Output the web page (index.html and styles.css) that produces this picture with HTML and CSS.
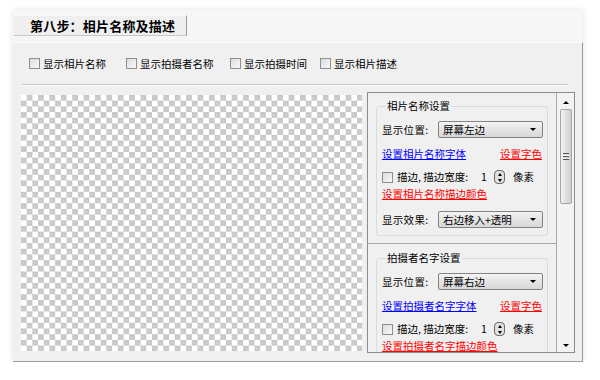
FILE: index.html
```html
<!DOCTYPE html>
<html lang="zh-CN">
<head>
    <meta charset="UTF-8">
    <title>第八步：相片名称及描述</title>
    <link rel="stylesheet" href="styles.css">
</head>
<body>

    <div class="window">
        <!-- 标题栏 -->
        <div class="head">
            <div class="tab">第八步：相片名称及描述</div>
        </div>

        <div class="content">
            <!-- 显示选项 -->
            <div class="opts">
                <label class="opt"><span class="cb"></span>显示相片名称</label>
                <label class="opt"><span class="cb"></span>显示拍摄者名称</label>
                <label class="opt"><span class="cb"></span>显示拍摄时间</label>
                <label class="opt"><span class="cb"></span>显示相片描述</label>
            </div>
            <div class="sep"></div>

            <div class="main">
                <div class="preview"></div>

                <!-- 右侧设置面板 -->
                <div class="panel">
                    <div class="panel-body">
                        <div class="section">
                            <fieldset class="group">
                                <legend>相片名称设置</legend>
                                <div class="row row-select">
                                    <span class="label">显示位置:</span>
                                    <div class="select">屏幕左边<i class="arrow"></i></div>
                                </div>
                                <div class="row row-links">
                                    <a class="link blue">设置相片名称字体</a>
                                    <a class="link red">设置字色</a>
                                </div>
                                <div class="row row-stroke">
                                    <span class="cb"></span>
                                    <span class="stroke-text">描边, 描边宽度:</span>
                                    <div class="spin"><span class="spin-val">1</span><span class="spin-btn"><i class="up"></i><i class="down"></i></span></div>
                                    <span class="unit">像素</span>
                                </div>
                                <div class="row row-link">
                                    <a class="link red">设置相片名称描边颜色</a>
                                </div>
                                <div class="row row-select row-effect">
                                    <span class="label">显示效果:</span>
                                    <div class="select">右边移入+透明<i class="arrow"></i></div>
                                </div>
                            </fieldset>
                        </div>

                        <div class="section">
                            <fieldset class="group">
                                <legend>拍摄者名字设置</legend>
                                <div class="row row-select">
                                    <span class="label">显示位置:</span>
                                    <div class="select">屏幕右边<i class="arrow"></i></div>
                                </div>
                                <div class="row row-links">
                                    <a class="link blue">设置拍摄者名字字体</a>
                                    <a class="link red">设置字色</a>
                                </div>
                                <div class="row row-stroke">
                                    <span class="cb"></span>
                                    <span class="stroke-text">描边, 描边宽度:</span>
                                    <div class="spin"><span class="spin-val">1</span><span class="spin-btn"><i class="up"></i><i class="down"></i></span></div>
                                    <span class="unit">像素</span>
                                </div>
                                <div class="row row-link">
                                    <a class="link red">设置拍摄者名字描边颜色</a>
                                </div>
                            </fieldset>
                        </div>
                    </div>

                    <!-- 滚动条 -->
                    <div class="scrollbar">
                        <i class="sb-up"></i>
                        <div class="thumb"><span class="grip"></span></div>
                        <i class="sb-down"></i>
                    </div>
                </div>
            </div>
        </div>
    </div>

</body>
</html>
```

FILE: styles.css
```css
body {
    margin: 0;
    background: #fff;
    font-family: 'Noto Sans CJK SC', 'Liberation Sans', sans-serif;
    font-size: 10.5px;
    color: #000;
}

.window {
    width: 570px;
    margin: 10px 0 0 13px;
    background: #f6f6f6;
    box-shadow: 0 0 6px rgba(0, 0, 0, 0.12);
}

.head {
    height: 32px;
    padding: 5px 0 0 1px;
    box-sizing: border-box;
}

.tab {
    width: 173px;
    height: 21px;
    box-sizing: border-box;
    padding-left: 16px;
    background: #efefef;
    border-top: 1px solid #fafafa;
    border-right: 1px solid #9a9a9a;
    border-bottom: 1px solid #c8c8c8;
    font-size: 13px;
    font-weight: bold;
    line-height: 19px;
    letter-spacing: 0.2px;
}

.content {
    height: 320px;
    box-sizing: border-box;
    background: #f0f0f0;
    border-top: 1px solid #fdfdfd;
    border-right: 1px solid #9c9c9c;
    border-bottom: 1px solid #9c9c9c;
}

.opts {
    height: 41px;
    display: flex;
    align-items: center;
    padding-left: 16px;
}

.opt {
    display: flex;
    align-items: center;
    line-height: 14px;
}

.opt:nth-child(1) { width: 97px; }
.opt:nth-child(2) { width: 104px; }
.opt:nth-child(3) { width: 90px; }

.cb {
    display: inline-block;
    width: 9px;
    height: 9px;
    border: 1px solid #8f8f8f;
    background: linear-gradient(135deg, #dcdcdc, #f8f8f8);
    margin-right: 3px;
    flex: none;
}

.sep {
    height: 0;
    margin: 0 14px 0 9px;
    border-top: 1px solid #c6c6c6;
    border-bottom: 1px solid #fbfbfb;
}

.main {
    display: flex;
    align-items: flex-start;
    padding: 6px 0 0 8px;
}

.preview {
    width: 341px;
    height: 256px;
    margin-top: 3px;
    background-color: #fff;
    background-image:
        linear-gradient(45deg, #c8c8c8 25%, transparent 25%, transparent 75%, #c8c8c8 75%),
        linear-gradient(45deg, #c8c8c8 25%, transparent 25%, transparent 75%, #c8c8c8 75%);
    background-size: 11.4px 11.4px;
    background-position: 0 0, 5.7px 5.7px;
}

.panel {
    display: flex;
    width: 208px;
    height: 261px;
    margin-left: 5px;
    box-sizing: border-box;
    border: 1px solid #8c8c8c;
    background: #f0f0f0;
    overflow: hidden;
}

.panel-body {
    width: 189px;
    border-right: 1px solid #a8a8a8;
    overflow: hidden;
}

.section {
    height: 151px;
    border-bottom: 1px solid #a8a8a8;
    padding: 7px 0 0 8px;
    box-sizing: border-box;
}

.section + .section {
    height: auto;
    padding-top: 8px;
    border-bottom: 0;
}

.group {
    width: 172px;
    box-sizing: border-box;
    margin: 0;
    padding: 0 4px 7px 5px;
    border: 1px solid #d4dde3;
    border-radius: 3px;
}

.group legend {
    padding: 0 1px;
    margin-left: 4px;
    font-size: 10.5px;
    line-height: 12px;
}

.row {
    display: flex;
    align-items: center;
    height: 16px;
    line-height: 14px;
}

.row-select {
    height: 17px;
    margin-top: 9px;
    justify-content: space-between;
}

.row-effect {
    margin-top: 9px;
}

.row-links {
    margin-top: 8px;
    justify-content: space-between;
    padding-right: 1px;
}

.row-stroke {
    margin-top: 7px;
}

.row-link {
    margin-top: 1px;
}

.label {
    letter-spacing: 0.3px;
}

.select {
    position: relative;
    width: 105px;
    height: 17px;
    box-sizing: border-box;
    padding-left: 4px;
    border: 1px solid #828282;
    border-radius: 2px;
    background: linear-gradient(#f4f4f4, #e4e4e4 50%, #d8d8d8);
    line-height: 15px;
    font-size: 10.5px;
}

.arrow {
    position: absolute;
    right: 6px;
    top: 6px;
    border-left: 3px solid transparent;
    border-right: 3px solid transparent;
    border-top: 3px solid #000;
}

.link {
    text-decoration: underline;
    cursor: pointer;
}

.blue { color: #0000ff; }
.red { color: #ff0000; }

.row-stroke .cb {
    margin-right: 4px;
}

.stroke-text {
    width: 81px;
}

.spin {
    display: flex;
    align-items: center;
    width: 27px;
    height: 15px;
    background: #f0f0f0;
}

.spin-val {
    width: 15px;
    padding-left: 3px;
}

.spin-btn {
    display: flex;
    flex-direction: column;
    justify-content: space-around;
    align-items: center;
    width: 10px;
    height: 12px;
    border: 1px solid #6a6a6a;
    border-radius: 4px;
    background: #e0e0e0;
}

.up, .down {
    display: block;
    border-left: 2.5px solid transparent;
    border-right: 2.5px solid transparent;
}

.up { border-bottom: 3px solid #000; }
.down { border-top: 3px solid #000; }

.unit {
    margin-left: 8px;
}

.scrollbar {
    position: relative;
    width: 17px;
    background: #f3f3f3;
}

.sb-up, .sb-down {
    position: absolute;
    left: 6px;
    border-left: 3px solid transparent;
    border-right: 3px solid transparent;
}

.sb-up {
    top: 8px;
    border-bottom: 3px solid #000;
}

.sb-down {
    bottom: 5px;
    border-top: 3px solid #000;
}

.thumb {
    display: flex;
    align-items: center;
    justify-content: center;
    width: 12px;
    height: 95px;
    margin: 16px 0 0 3px;
    box-sizing: border-box;
    border: 1px solid #a4a4a4;
    border-radius: 2px;
    background: linear-gradient(90deg, #f2f2f2, #dcdcdc 60%, #cfcfcf);
}

.grip {
    width: 6px;
    height: 5px;
    border-top: 1px solid #555;
    border-bottom: 1px solid #555;
    background: linear-gradient(#fff 0 1px, #555 1px 2px, transparent 2px) 0 1px / 100% 3px no-repeat;
}
```
